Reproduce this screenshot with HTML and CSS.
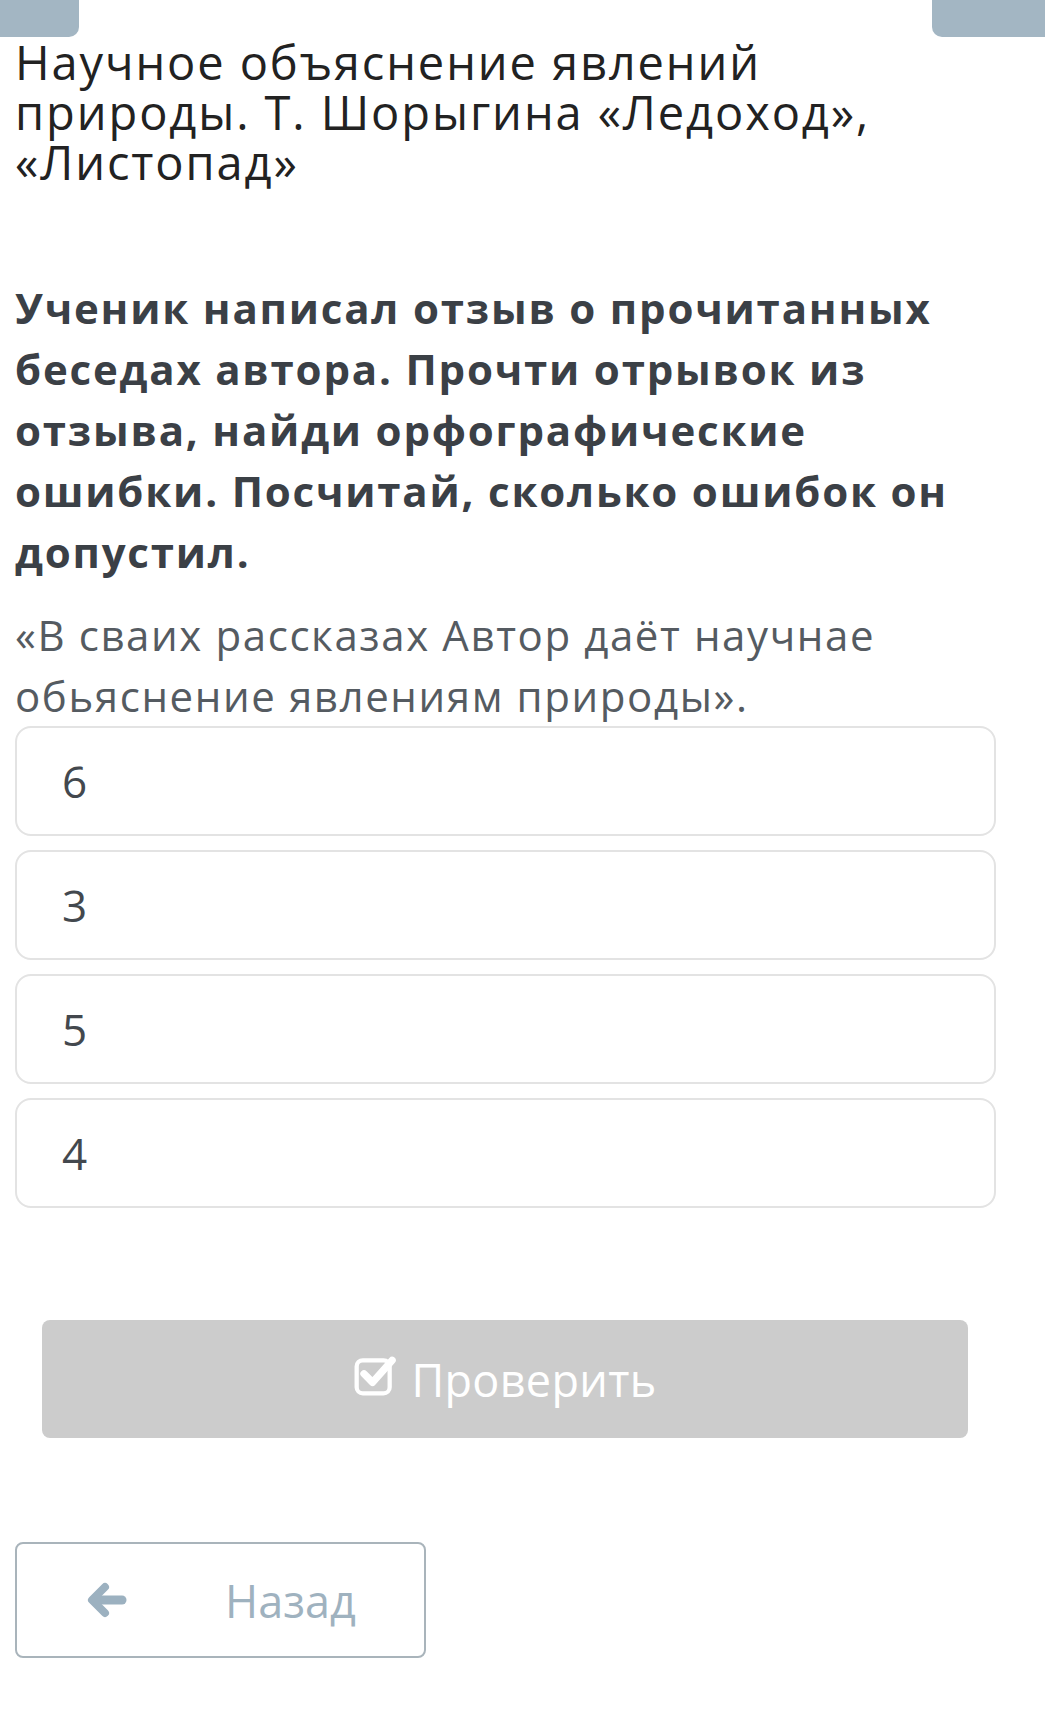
FILE: index.html
```html
<!DOCTYPE html>
<html lang="ru">
<head>
    <meta charset="UTF-8">
    <meta name="viewport" content="width=device-width, initial-scale=1.0">
    <title>Научное объяснение явлений природы</title>
    <link rel="stylesheet" href="styles.css">
</head>
<body>

    <div class="top-bar">
        <div class="top-btn top-btn-left"></div>
        <div class="top-btn top-btn-right"></div>
    </div>

    <div class="page">
        <h1 class="lesson-title">Научное объяснение явлений природы. Т. Шорыгина «Ледоход», «Листопад»</h1>

        <p class="question">Ученик написал отзыв о прочитанных беседах автора. Прочти отрывок из отзыва, найди орфографические ошибки. Посчитай, сколько ошибок он допустил.</p>
        <p class="quote">«В сваих рассказах Автор даёт научнае обьяснение явлениям природы».</p>

        <div class="answers">
            <div class="answer">6</div>
            <div class="answer">3</div>
            <div class="answer">5</div>
            <div class="answer">4</div>
        </div>

        <div class="check-wrap">
            <button class="check-btn" disabled>
                <svg class="check-icon" viewBox="0 0 36 36" width="44" height="44">
                    <rect x="3" y="6" width="27" height="27" rx="5" fill="none" stroke="#fff" stroke-width="3.5"/>
                    <path d="M9 17 L16 24 L32 6" fill="none" stroke="#fff" stroke-width="6" stroke-linecap="round" stroke-linejoin="round"/>
                </svg>
                Проверить
            </button>
        </div>

        <button class="back-btn">
            <svg class="back-icon" viewBox="0 0 40 36" width="40" height="36">
                <path d="M18 5 L5 18 L18 31" fill="none" stroke="#9cb1c0" stroke-width="8" stroke-linecap="round" stroke-linejoin="round"/>
                <path d="M7 18 L35 18" fill="none" stroke="#9cb1c0" stroke-width="9" stroke-linecap="round"/>
            </svg>
            <span>Назад</span>
        </button>
    </div>

</body>
</html>
```

FILE: styles.css
```css
body {
    margin: 0;
    font-family: "Open Sans", "Noto Sans", sans-serif;
    background-color: #fff;
    color: #222;
}

/* Top bar buttons, cut off by the screen edge */
.top-bar {
    display: flex;
    justify-content: space-between;
    height: 37px;
}
.top-btn {
    background-color: #a3b6c3;
    height: 37px;
}
.top-btn-left {
    width: 79px;
    border-radius: 0 0 10px 0;
}
.top-btn-right {
    width: 113px;
    border-radius: 0 0 0 10px;
}

.page {
    padding: 0 49px 0 15px;
}

.lesson-title {
    font-size: 47px;
    font-weight: 400;
    letter-spacing: 1.9px;
    line-height: 50px;
    margin: 0;
    color: #222;
}

.question {
    font-size: 42px;
    font-weight: 700;
    letter-spacing: 1.8px;
    line-height: 61px;
    color: #3b4046;
    margin: 90px 0 0 0;
}
.quote {
    font-size: 42px;
    letter-spacing: 1.6px;
    line-height: 61px;
    color: #555b61;
    margin: 22px 0 0 0;
}

/* Answer options */
.answers {
    display: flex;
    flex-direction: column;
    gap: 14px;
}
.answer {
    height: 106px;
    border: 2px solid #e3e3e3;
    border-radius: 16px;
    display: flex;
    align-items: center;
    padding-left: 45px;
    font-size: 44px;
    color: #43484e;
}

.check-wrap {
    padding: 0 28px 0 27px;
    margin-top: 112px;
}
.check-btn {
    width: 100%;
    height: 118px;
    background-color: #cccccc;
    border: none;
    border-radius: 8px;
    color: #fff;
    font-family: "Open Sans", sans-serif;
    font-size: 45px;
    letter-spacing: 0.3px;
    display: flex;
    align-items: center;
    justify-content: center;
    gap: 14px;
    padding: 0;
}
.check-icon {
    margin-top: -8px;
}

.back-btn {
    margin-top: 104px;
    width: 411px;
    height: 116px;
    background-color: #fff;
    border: 2px solid #a9b4bb;
    border-radius: 8px;
    display: flex;
    align-items: center;
    padding: 0 0 0 70px;
    font-family: "Open Sans", sans-serif;
    font-size: 45px;
    color: #9fb2bf;
}
.back-btn span {
    margin-left: 98px;
}
```
